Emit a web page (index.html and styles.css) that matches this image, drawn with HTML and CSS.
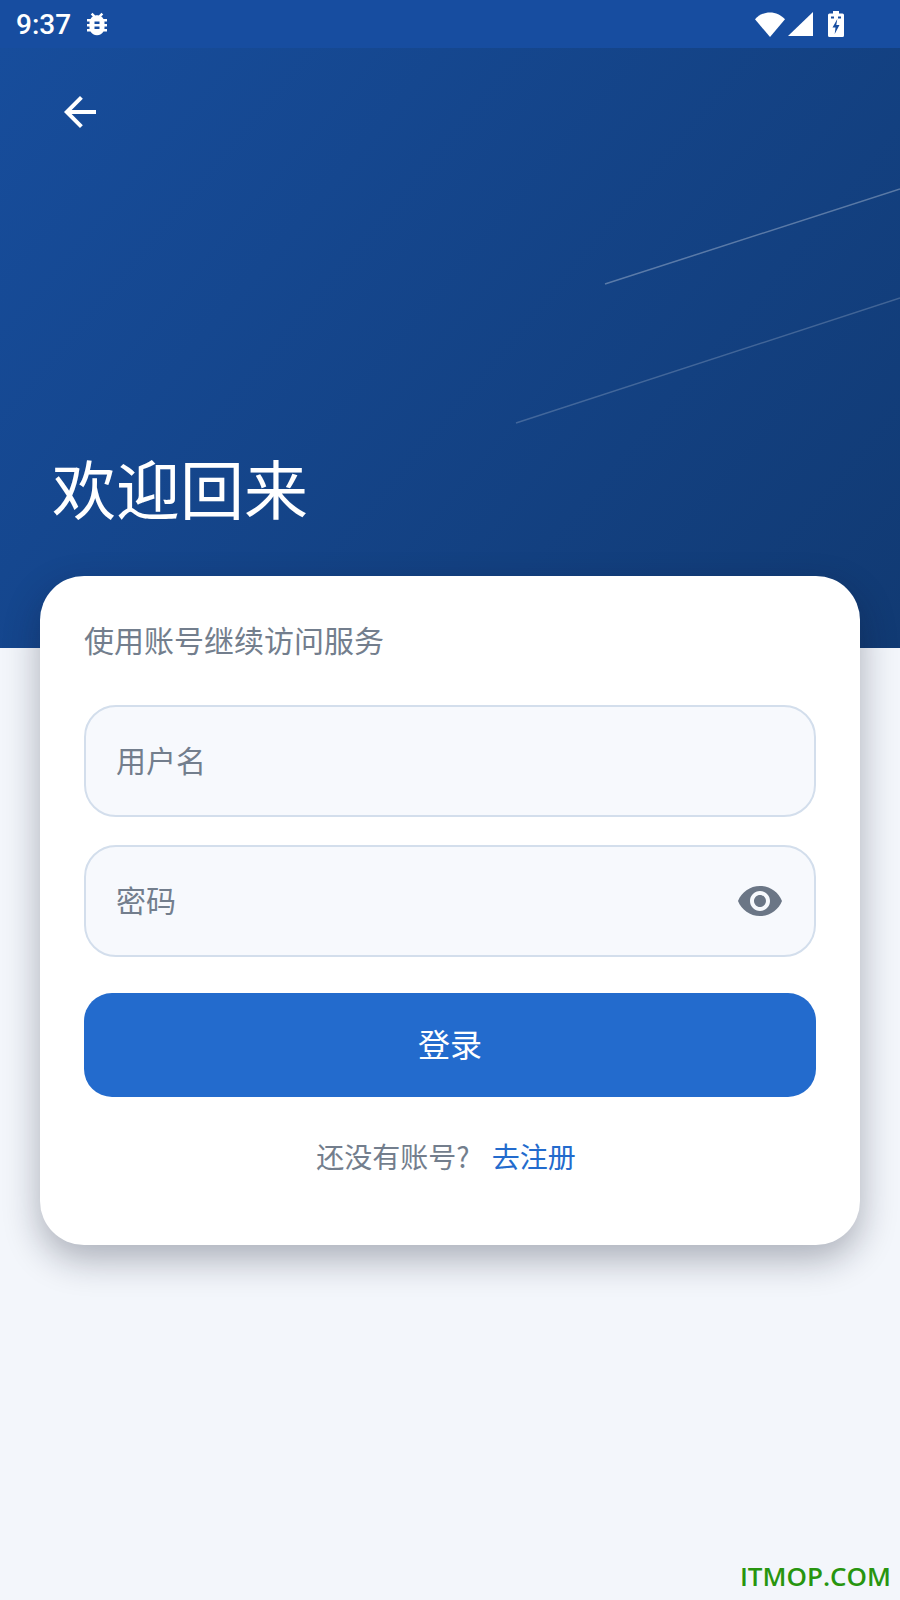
FILE: index.html
```html
<!DOCTYPE html>
<html lang="zh-CN">
  <head>
    <meta charset="UTF-8" />
    <meta name="viewport" content="width=device-width, initial-scale=1.0" />
    <title>登录</title>
    <link rel="stylesheet" href="styles.css">
  </head>
  <body>
    <div class="status-bar">
      <span class="clock">9:37</span>
      <svg class="icon-bug" viewBox="0 0 24 24" width="30" height="30">
        <path d="M20 8h-2.81c-.45-.78-1.07-1.45-1.82-1.96L17 4.41 15.59 3l-2.17 2.17C12.96 5.06 12.49 5 12 5c-.49 0-.96.06-1.41.17L8.41 3 7 4.41l1.62 1.63C7.88 6.55 7.26 7.22 6.81 8H4v2h2.09c-.05.33-.09.66-.09 1v1H4v2h2v1c0 .34.04.67.09 1H4v2h2.81c1.04 1.79 2.97 3 5.19 3s4.15-1.21 5.19-3H20v-2h-2.09c.05-.33.09-.66.09-1v-1h2v-2h-2v-1c0-.34-.04-.67-.09-1H20V8zm-6 8h-4v-2h4v2zm0-4h-4v-2h4v2z" />
      </svg>
      <div class="status-right">
        <svg class="icon-wifi" viewBox="0 0 30 25" width="30" height="25">
          <path d="M15 25 0 7.2C4 3 9.2 0.4 15 0.4S26 3 30 7.2z" />
        </svg>
        <svg class="icon-signal" viewBox="0 0 25 24" width="25" height="24">
          <path d="M25 0v24H0z" />
        </svg>
        <svg class="icon-battery" viewBox="0 0 16 26" width="16" height="26">
          <path fill-rule="evenodd" d="M5 0h6v2.500h3.500q1.500 0 1.500 1.500v20.500q0 1.500-1.500 1.500h-13q-1.500 0-1.500-1.500v-20.500q0-1.500 1.500-1.500h3.500zM3 5.500v2h3v-2zM10 5.500v2h3v-2zM9.300 8 4.500 16.500h3l-.8 6.500 4.800-9h-3.200z" />
        </svg>
      </div>
    </div>

    <header class="hero">
      <svg class="hero-lines" viewBox="0 0 900 600" width="900" height="600">
        <line x1="605" y1="236" x2="900" y2="141" />
        <line class="faint" x1="516" y1="375" x2="900" y2="250" />
      </svg>
      <button class="back-btn" aria-label="返回">
        <svg viewBox="0 0 24 24" width="48" height="48">
          <path d="M20 11H7.830l5.590-5.590L12 4l-8 8 8 8 1.410-1.410L7.830 13H20v-2z" />
        </svg>
      </button>
      <h1>欢迎回来</h1>
    </header>

    <main class="card">
      <p class="subtitle">使用账号继续访问服务</p>
      <div class="field">
        <span class="placeholder">用户名</span>
      </div>
      <div class="field">
        <span class="placeholder">密码</span>
        <svg class="icon-eye" viewBox="0 0 24 24" width="48" height="48">
          <path d="M12 4.500C7 4.500 2.730 7.610 1 12c1.730 4.390 6 7.500 11 7.500s9.270-3.110 11-7.500c-1.730-4.390-6-7.500-11-7.500zM12 17c-2.760 0-5-2.240-5-5s2.240-5 5-5 5 2.240 5 5-2.240 5-5 5zm0-8c-1.660 0-3 1.340-3 3s1.340 3 3 3 3-1.340 3-3-1.340-3-3-3z" />
        </svg>
      </div>
      <button class="login-btn">登录</button>
      <p class="register">
        <span>还没有账号?</span>
        <a href="#">去注册</a>
      </p>
    </main>

    <div class="watermark">ITMOP.COM</div>
  </body>
</html>
```

FILE: styles.css
```css
* {
  box-sizing: border-box;
}
html,
body {
  margin: 0;
  height: 1600px;
  overflow: hidden;
}
body {
  position: relative;
  background-color: #f3f6fb;
  font-family: "Noto Sans CJK SC", "Noto Sans", sans-serif;
  color: #737e8d;
}
.status-bar {
  display: flex;
  align-items: center;
  height: 48px;
  padding: 0 56px 0 16px;
  background-color: #174da0;
  color: #fff;
  fill: #fff;
}
.clock {
  font-family: Roboto, sans-serif;
  font-size: 28px;
  font-weight: 500;
}
.icon-bug {
  margin-left: 11px;
}
.status-right {
  display: flex;
  align-items: center;
  margin-left: auto;
}
.icon-signal {
  margin-left: 3px;
}
.icon-battery {
  margin-left: 15px;
}
.hero {
  position: relative;
  height: 600px;
  padding: 40px 0 0 56px;
  background: linear-gradient(130deg, #174d9c 0%, #113a73 100%);
}
.hero-lines {
  position: absolute;
  top: 0;
  left: 0;
}
.hero-lines line {
  stroke: rgba(255, 255, 255, 0.3);
  stroke-width: 1.5;
}
.hero-lines .faint {
  stroke: rgba(255, 255, 255, 0.2);
}
.back-btn {
  display: block;
  width: 48px;
  height: 48px;
  padding: 0;
  border: none;
  background: none;
  fill: #fff;
}
.hero h1 {
  margin: 306px 0 0 -4px;
  font-size: 64px;
  font-weight: 400;
  line-height: 88px;
  color: #fff;
}
.card {
  position: relative;
  display: flex;
  flex-direction: column;
  height: 669px;
  margin: -72px 40px 0;
  padding: 39px 44px 0;
  border-radius: 44px;
  background-color: #fff;
  box-shadow: 0 14px 36px rgba(15, 23, 42, 0.32);
}
.subtitle {
  margin: 0 0 41px;
  font-size: 30px;
  line-height: 49px;
}
.field {
  display: flex;
  align-items: center;
  justify-content: space-between;
  height: 112px;
  margin-bottom: 28px;
  padding: 0 30px 0 30px;
  border: 2px solid #d3deec;
  border-radius: 32px;
  background-color: #f7f9fd;
  font-size: 30px;
}
.placeholder {
  margin-top: -4px;
}
.icon-eye {
  fill: #6b7686;
}
.login-btn {
  height: 104px;
  margin-top: 8px;
  padding-bottom: 6px;
  border: none;
  border-radius: 28px;
  background-color: #236bcd;
  color: #fff;
  font-family: inherit;
  font-size: 32px;
}
.register {
  display: flex;
  justify-content: center;
  gap: 22px;
  margin: 38px 8px 0 0;
  font-size: 28px;
  line-height: 42px;
}
.register a {
  color: #236bcd;
  text-decoration: none;
}
.watermark {
  position: absolute;
  right: 9px;
  bottom: 6px;
  font-family: "Open Sans", sans-serif;
  font-size: 26px;
  font-weight: 600;
  color: #28950f;
}
```
